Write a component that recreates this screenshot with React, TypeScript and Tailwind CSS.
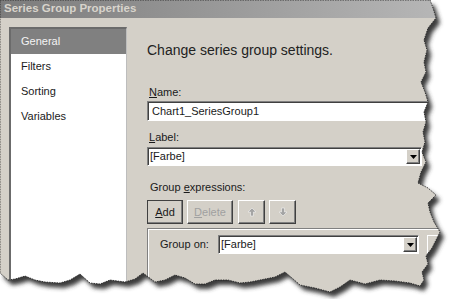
const edge =
  "M0 0 L430 0 L433 8 L436 18 L428 28 L424 40 L427 50 L424 62 L426 72 L421 82 L425 92 L428 102 L424 112 L426 122 L423 132 L425 142 L422 152 L426 162 L421 172 L418 183 L428 188 L436 195 L428 203 L430 212 L434 222 L440 232 L436 240 L432 248 L426 256 L428 264 L422 272 L424 280 L420 286 L410 283 L395 281 L380 280 L365 284 L350 280 L340 287 L330 292 L315 288 L300 285 L292 278 L285 272 L275 277 L265 279 L250 282 L240 283 L228 280 L215 280 L205 284 L195 284 L185 278 L175 275 L165 280 L155 282 L143 273 L135 279 L125 282 L110 280 L100 284 L90 283 L80 274 L70 280 L60 283 L45 282 L35 280 L25 276 L15 279 L8 280 L0 273 Z";

const outside = "M0 0 H450 V299 H0 Z " + edge;

function TornEdge() {
  return (
    <svg className="absolute inset-0 pointer-events-none" width="450" height="299" viewBox="0 0 450 299">
      <defs>
        <clipPath id="out">
          <path d={outside} clipRule="evenodd" />
        </clipPath>
        <filter id="blur" x="-5%" y="-5%" width="110%" height="110%">
          <feGaussianBlur stdDeviation="2.2" />
        </filter>
      </defs>
      <path d={outside} fill="#ffffff" fillRule="evenodd" />
      <g clipPath="url(#out)">
        <path d={edge} transform="translate(4 5)" fill="#3a3a3a" filter="url(#blur)" />
      </g>
      <path d={edge} fill="none" stroke="#1a1a1a" strokeWidth="0.8" strokeDasharray="1.5 1" />
    </svg>
  );
}

function DropButton() {
  return (
    <div className="w-[14px] self-stretch flex items-center justify-center bg-[#d4d0c8] border border-t-white border-l-white border-r-[#404040] border-b-[#404040] shadow-[inset_-1px_-1px_0_#808080]">
      <svg width="7" height="4" viewBox="0 0 7 4">
        <path d="M0 0 H7 L3.5 4 Z" fill="#000" />
      </svg>
    </div>
  );
}

const sunken =
  "bg-white border border-t-[#808080] border-l-[#808080] border-b-white border-r-white shadow-[inset_1px_1px_0_#404040]";
const raised =
  "bg-[#d4d0c8] border border-t-white border-l-white border-r-[#404040] border-b-[#404040] shadow-[inset_-1px_-1px_0_#808080]";

function Arrow({ up }: { up: boolean }) {
  return (
    <svg width="10" height="10" viewBox="0 0 10 10">
      {up ? (
        <path d="M5 1 L9 5 H6.5 V9 H3.5 V5 H1 Z" fill="#a4a4a4" stroke="#f4f4f4" strokeWidth="0.6" />
      ) : (
        <path d="M5 9 L9 5 H6.5 V1 H3.5 V5 H1 Z" fill="#a4a4a4" stroke="#f4f4f4" strokeWidth="0.6" />
      )}
    </svg>
  );
}

export default function App() {
  const items = ["General", "Filters", "Sorting", "Variables"];
  return (
    <div
      className="relative w-[450px] h-[299px] overflow-hidden bg-[#d4d0c8] text-[11px] text-[#1a1a1a]"
      style={{ fontFamily: '"Liberation Sans", Arial, sans-serif' }}
    >
      <div className="h-[18px] flex items-center pl-[4px] bg-gradient-to-r from-[#7c7c7c] to-[#b8b8b8] text-[#d8d4cc] font-bold text-[11.5px]">
        Series Group Properties
      </div>
      <div className="flex">
        <div className="pl-[9px] pt-[9px]">
          <div className="w-[118px] h-[280px] bg-white border-t-2 border-l-2 border-[#6b6b6b] border-r border-r-[#bdbdbd]">
            {items.map((it, i) => (
              <div
                key={it}
                className={
                  "h-[25px] flex items-center pl-[10px] " +
                  (i === 0 ? "bg-[#808080] text-[#f4f4f4]" : "text-[#1a1a1a]")
                }
              >
                {it}
              </div>
            ))}
          </div>
        </div>
        <div className="ml-[20px] flex-1 flex flex-col">
          <div className="mt-[24px] h-[16px] text-[14px] leading-[16px] text-[#222]">Change series group settings.</div>
          <div className="mt-[28px] pl-[2px] h-[13px] leading-[13px]">
            <span className="underline">N</span>ame:
          </div>
          <div className={"mt-[2px] h-[20px] w-[300px] flex items-center pl-[4px] " + sunken}>Chart1_SeriesGroup1</div>
          <div className="mt-[10px] pl-[2px] h-[13px] leading-[13px]">
            <span className="underline">L</span>abel:
          </div>
          <div className={"mt-[3px] h-[19px] w-[275px] flex items-center justify-between pl-[2px] pr-[1px] py-[1px] " + sunken}>
            <span>[Farbe]</span>
            <DropButton />
          </div>
          <div className="mt-[15px] pl-[3px] h-[13px] leading-[13px]">
            Group <span className="underline">e</span>xpressions:
          </div>
          <div className="mt-[6px] flex gap-[4px] h-[24px]">
            <div className={"w-[36px] flex items-center justify-center outline outline-1 outline-[#404040] -outline-offset-1 " + raised}>
              <span className="underline">A</span>dd
            </div>
            <div className={"w-[46px] flex items-center justify-center text-[#a0a0a0] " + raised}>
              <span className="underline">D</span>elete
            </div>
            <div className={"w-[27px] flex items-center justify-center ml-[1px] " + raised}>
              <Arrow up />
            </div>
            <div className={"w-[27px] flex items-center justify-center " + raised}>
              <Arrow up={false} />
            </div>
          </div>
          <div className="mt-[4px] flex-1 border-t border-l border-t-[#808080] border-l-[#808080] shadow-[inset_1px_1px_0_#ffffff]">
            <div className="mt-[6px] flex items-center h-[19px]">
              <div className="ml-[12px] w-[58px]">Group on:</div>
              <div className={"h-[19px] w-[201px] flex items-center justify-between pl-[2px] pr-[1px] py-[1px] " + sunken}>
                <span>[Farbe]</span>
                <DropButton />
              </div>
              <div className={"ml-[8px] w-[20px] h-[19px] " + raised}></div>
            </div>
          </div>
        </div>
      </div>
      <TornEdge />
    </div>
  );
}
